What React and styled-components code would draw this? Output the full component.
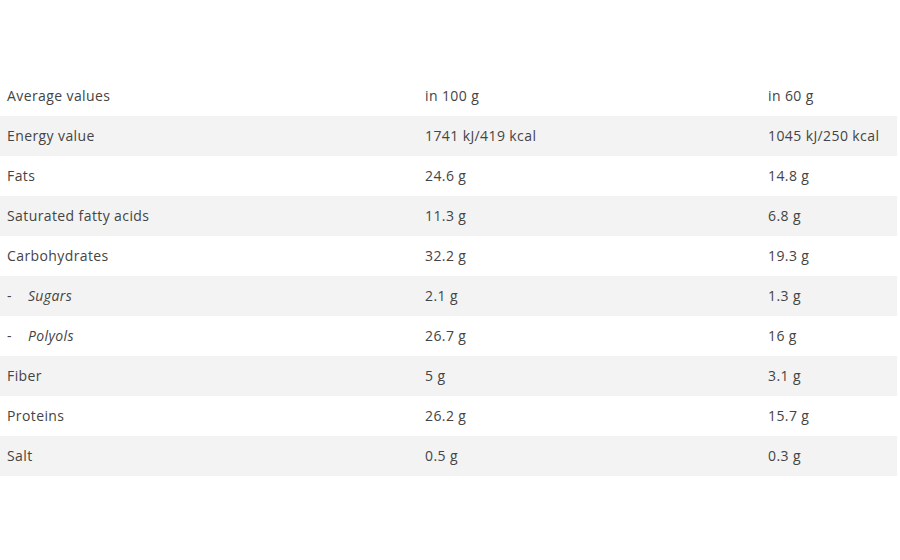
import styled, { createGlobalStyle } from "styled-components";

const GlobalStyle = createGlobalStyle`
  body {
    margin: 0;
    background: #fff;
    font-family: "Open Sans", "Noto Sans", sans-serif;
  }
`;

const Page = styled.div`
  width: 900px;
  height: 560px;
  padding-top: 76px;
  box-sizing: border-box;
`;

const Table = styled.div`
  width: 897px;
`;

const Row = styled.div`
  display: grid;
  grid-template-columns: 418px 343px 1fr;
  height: 40px;
  padding-bottom: 2px;
  box-sizing: border-box;
  align-items: center;
  background: ${(p) => (p.$shaded ? "#f3f3f3" : "#fff")};
  color: #444;
  font-size: 14px;
  letter-spacing: 0.4px;
`;

const Cell = styled.div`
  padding-left: 7px;
  white-space: nowrap;
`;

const Sub = styled.span`
  display: inline-flex;
  gap: 16px;

  em {
    font-style: italic;
  }
`;

const rows = [
  ["Average values", "in 100 g", "in 60 g"],
  ["Energy value", "1741 kJ/419 kcal", "1045 kJ/250 kcal"],
  ["Fats", "24.6 g", "14.8 g"],
  ["Saturated fatty acids", "11.3 g", "6.8 g"],
  ["Carbohydrates", "32.2 g", "19.3 g"],
  ["Sugars", "2.1 g", "1.3 g", true],
  ["Polyols", "26.7 g", "16 g", true],
  ["Fiber", "5 g", "3.1 g"],
  ["Proteins", "26.2 g", "15.7 g"],
  ["Salt", "0.5 g", "0.3 g"],
];

export default function App() {
  return (
    <>
      <GlobalStyle />
      <Page>
        <Table>
          {rows.map(([name, a, b, sub], i) => (
            <Row key={name} $shaded={i % 2 === 1}>
              <Cell>
                {sub ? (
                  <Sub>
                    <span>-</span>
                    <em>{name}</em>
                  </Sub>
                ) : (
                  name
                )}
              </Cell>
              <Cell>{a}</Cell>
              <Cell>{b}</Cell>
            </Row>
          ))}
        </Table>
      </Page>
    </>
  );
}
